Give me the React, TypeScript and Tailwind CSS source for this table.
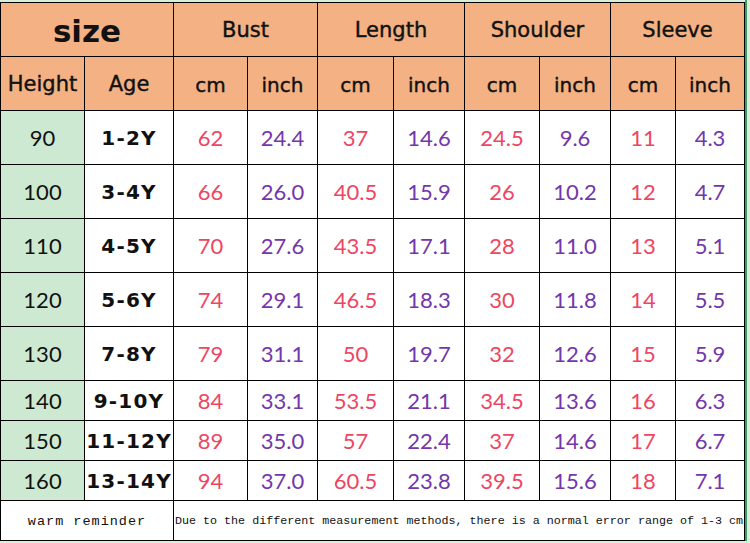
import React from "react";

const rows: string[][] = [
  ["90", "1-2Y", "62", "24.4", "37", "14.6", "24.5", "9.6", "11", "4.3"],
  ["100", "3-4Y", "66", "26.0", "40.5", "15.9", "26", "10.2", "12", "4.7"],
  ["110", "4-5Y", "70", "27.6", "43.5", "17.1", "28", "11.0", "13", "5.1"],
  ["120", "5-6Y", "74", "29.1", "46.5", "18.3", "30", "11.8", "14", "5.5"],
  ["130", "7-8Y", "79", "31.1", "50", "19.7", "32", "12.6", "15", "5.9"],
  ["140", "9-10Y", "84", "33.1", "53.5", "21.1", "34.5", "13.6", "16", "6.3"],
  ["150", "11-12Y", "89", "35.0", "57", "22.4", "37", "14.6", "17", "6.7"],
  ["160", "13-14Y", "94", "37.0", "60.5", "23.8", "39.5", "15.6", "18", "7.1"],
];

const head = "flex items-center justify-center pt-[3px] bg-[#f4b183] text-[#111] font-['DejaVu_Sans',sans-serif] [-webkit-text-stroke:0.4px_#111]";
const cell = "flex items-center justify-center bg-white font-['Lato',sans-serif] text-[22px]";

export default function App() {
  return (
    <div className="w-[750px] h-[543px] bg-[#d9f0dc] pt-[2px] flex overflow-hidden">
      <div className="w-[745px] h-[539px] bg-black p-px">
        <div className="grid gap-px grid-cols-[83px_88px_73px_69px_75px_70px_74px_70px_64px_68px] grid-rows-[53px_53px_53px_53px_53px_53px_53px_39px_39px_39px_39px]">
          <div className={`${head} col-span-2 text-[31px] font-bold [-webkit-text-stroke:0px]`}>size</div>
          <div className={`${head} col-span-2 text-[21px]`}>Bust</div>
          <div className={`${head} col-span-2 text-[21px]`}>Length</div>
          <div className={`${head} col-span-2 text-[21px]`}>Shoulder</div>
          <div className={`${head} col-span-2 text-[21px]`}>Sleeve</div>

          <div className={`${head} text-[21px]`}>Height</div>
          <div className={`${head} text-[21px]`}>Age</div>
          {["cm", "inch", "cm", "inch", "cm", "inch", "cm", "inch"].map((t, i) => (
            <div key={i} className={`${head} text-[20px]`}>{t}</div>
          ))}

          {rows.map((r, ri) => (
            <React.Fragment key={ri}>
              <div className="flex items-center justify-center bg-[#cde9d2] font-['Lato',sans-serif] text-[22px] text-[#111]">{r[0]}</div>
              <div className="flex items-center justify-center bg-white font-['DejaVu_Sans',sans-serif] font-bold text-[20px] tracking-[1.2px] text-[#111]">{r[1]}</div>
              {r.slice(2).map((v, vi) => (
                <div key={vi} className={`${cell} ${vi % 2 === 0 ? "text-[#ee4662]" : "text-[#7336ab]"}`}>{v}</div>
              ))}
            </React.Fragment>
          ))}

          <div className="col-span-2 flex items-center justify-center pt-[3px] bg-white font-['Liberation_Mono',monospace] text-[13.5px] tracking-[1px] text-[#111]">
            warm reminder
          </div>
          <div className="col-span-8 flex items-center pt-[3px] bg-white overflow-hidden whitespace-nowrap pl-px font-['Liberation_Mono',monospace] text-[11.7px] text-[#111]">
            Due to the different measurement methods, there is a normal error range of 1-3 cm
          </div>
        </div>
      </div>
      <div className="w-[2px] h-[541px] -mt-[2px] bg-[#3d9c66]" />
    </div>
  );
}
